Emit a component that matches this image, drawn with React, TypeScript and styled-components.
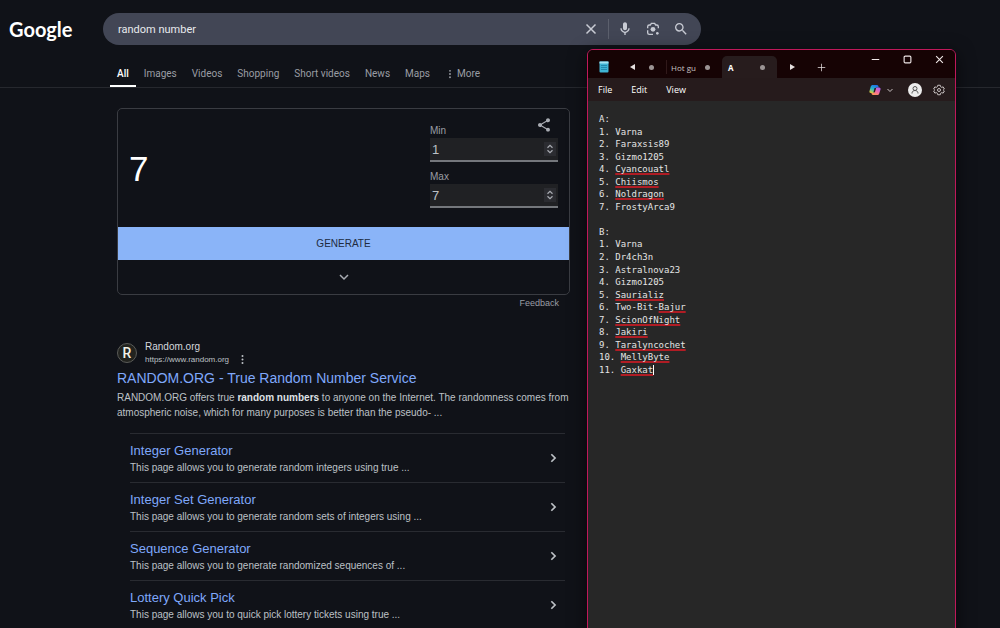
import React from "react";
import styled, { createGlobalStyle } from "styled-components";

const ui = '"Liberation Sans", Arial, sans-serif';
const brand = 'Roboto, "Liberation Sans", sans-serif';
const system = '"Open Sans", "Noto Sans", sans-serif';
const mono = '"DejaVu Sans Mono", "Liberation Mono", monospace';

const GlobalStyle = createGlobalStyle`
  * { box-sizing: border-box; }
  body {
    margin: 0;
    background: #101218;
    color: #bdc1c6;
    font-family: ${ui};
    font-size: 10px;
  }
  button { font: inherit; color: inherit; background: none; border: 0; padding: 0; }
  a { color: inherit; text-decoration: none; }
  p, h2, h3 { margin: 0; font-weight: 400; }
`;

const Desktop = styled.div`
  position: relative;
  height: 100vh;
  overflow: hidden;
`;

const Header = styled.header`
  border-bottom: 1px solid #26282e;
`;

const HeaderTop = styled.div`
  display: flex;
  align-items: center;
  padding: 13px 0 0 9px;
`;

const Logo = styled.a`
  width: 94px;
  font: 700 20px/32px Lato, sans-serif;
  color: #fff;
`;

const SearchBar = styled.form`
  display: flex;
  align-items: center;
  width: 598px;
  height: 32px;
  padding: 0 6px 0 15px;
  border-radius: 16px;
  background: #424655;
`;

const SearchInput = styled.input`
  flex: 1;
  min-width: 0;
  padding: 0;
  border: 0;
  outline: 0;
  background: none;
  color: #e8eaed;
  font: 11px ${brand};
`;

const SearchButton = styled.button`
  display: grid;
  place-items: center;
  width: 28px;
  height: 28px;
  color: #c8cbd4;
`;

const SearchDivider = styled.span`
  width: 1px;
  height: 20px;
  margin: 0 2px 0 3px;
  background: #5c606d;
`;

const Tabs = styled.nav`
  display: flex;
  gap: 1px;
  padding: 16px 0 0 110px;
  font: 10px/25px ${brand};
`;

const Tab = styled.a<{ $active?: boolean }>`
  height: 26px;
  padding: 0 7px;
  color: ${(p) => (p.$active ? "#fff" : "#9a9da4")};
  font-weight: ${(p) => (p.$active ? 500 : 400)};
  border-bottom: 2px solid ${(p) => (p.$active ? "#fff" : "transparent")};
`;

const MoreButton = styled.button`
  display: flex;
  align-items: center;
  gap: 2px;
  height: 25px;
  margin-left: 7px;
  color: #9a9da4;
`;

const Results = styled.main`
  width: 453px;
  margin: 20px 0 0 117px;
`;

const Card = styled.section`
  border: 1px solid #3a3c42;
  border-radius: 5px;
  overflow: hidden;
`;

const CardBody = styled.div`
  display: flex;
  justify-content: space-between;
  height: 118px;
  padding: 8px 11px 0;
`;

const Output = styled.output`
  margin-top: 32px;
  color: #fff;
  font-size: 35px;
  line-height: 40px;
`;

const Fields = styled.div`
  position: relative;
  width: 128px;
  padding-top: 6px;
`;

const ShareButton = styled.button`
  position: absolute;
  top: 0;
  right: 6px;
  width: 16px;
  height: 16px;
  color: #a9acb3;
`;

const Field = styled.div`
  display: flex;
  flex-direction: column;
  margin-bottom: 7px;
`;

const FieldLabel = styled.label`
  color: #9a9da4;
  font-size: 10px;
  line-height: 15px;
`;

const NumberBox = styled.div`
  display: flex;
  align-items: center;
  height: 24px;
  padding: 0 2px;
  background: #202124;
  border-bottom: 2px solid #74777c;
`;

const NumberInput = styled.input`
  flex: 1;
  min-width: 0;
  padding: 0;
  border: 0;
  outline: 0;
  background: none;
  color: #bdc1c6;
  font: 13px ${ui};
`;

const Spinner = styled.button`
  display: grid;
  place-items: center;
  width: 12px;
  height: 14px;
  background: #2b2c31;
  color: #a9acb3;
`;

const Generate = styled.button`
  display: block;
  width: 100%;
  height: 33px;
  background: #8ab4f8;
  color: #202b40;
`;

const Expand = styled.button`
  display: grid;
  place-items: center;
  width: 100%;
  height: 34px;
  color: #a9acb3;
`;

const Feedback = styled.a`
  display: block;
  padding-right: 11px;
  color: #9a9da4;
  font-size: 9px;
  line-height: 16px;
  text-align: right;
`;

const Result = styled.article`
  margin-top: 29px;
`;

const Source = styled.div`
  display: flex;
  align-items: center;
  gap: 8px;
`;

const Favicon = styled.span`
  display: grid;
  place-items: center;
  width: 20px;
  height: 20px;
  border: 1px solid #5a5b58;
  border-radius: 50%;
  background: #22231f;
  color: #f2f1e8;
  font: 500 14px/16px ${brand};
`;

const SiteName = styled.div`
  color: #d5d8dc;
  line-height: 13px;
`;

const SiteUrl = styled.div`
  display: flex;
  align-items: center;
  gap: 8px;
  font-size: 8px;
  line-height: 13px;
`;

const AboutButton = styled.button`
  display: grid;
`;

const ResultTitle = styled.h2`
  margin-top: 1px;
  color: #7fa8fb;
  font-size: 14px;
  line-height: 22px;
`;

const Snippet = styled.p`
  margin-top: 1px;
  line-height: 15px;

  b { color: #dfe1e5; }
`;

const SiteLinks = styled.ul`
  margin: 13px 5px 0 13px;
  padding: 0;
  list-style: none;
`;

const SiteLink = styled.li`
  display: flex;
  align-items: center;
  justify-content: space-between;
  height: 49px;
  padding-right: 7px;
  border-top: 1px solid #292b31;
`;

const LinkTitle = styled.h3`
  color: #7fa8fb;
  font-size: 13px;
  line-height: 18px;
`;

const LinkText = styled.p`
  line-height: 15px;
`;

const Notepad = styled.section`
  position: absolute;
  top: 49px;
  left: 587px;
  bottom: -8px;
  width: 369px;
  display: flex;
  flex-direction: column;
  overflow: hidden;
  border: 1px solid #c0185a;
  border-radius: 6px;
  background: #272727;
  box-shadow: 0 4px 18px rgba(0, 0, 0, 0.6);
  color: #fff;
  font: 10px ${system};
`;

const TitleBar = styled.div`
  display: flex;
  align-items: flex-end;
  height: 28px;
  background: #160304;
`;

const BarButton = styled.button<{ $width: number }>`
  display: grid;
  place-items: center;
  width: ${(p) => p.$width}px;
  height: 22px;
  color: #e6e0e0;
`;

const FileTab = styled.div<{ $width: number; $active?: boolean }>`
  display: flex;
  align-items: center;
  justify-content: space-between;
  width: ${(p) => p.$width}px;
  height: 22px;
  padding: 0 12px 0 ${(p) => (p.$active ? 6 : 4)}px;
  border-radius: 5px 5px 0 0;
  background: ${(p) => (p.$active ? "#271c1d" : "transparent")};
  color: ${(p) => (p.$active ? "#fff" : "#c9c2c2")};
  font-size: 8px;
  font-weight: ${(p) => (p.$active ? 700 : 400)};
  white-space: nowrap;
`;

const UnsavedDot = styled.span`
  flex: none;
  width: 5px;
  height: 5px;
  border-radius: 50%;
  background: #9b9494;
`;

const TabEdge = styled.span`
  width: 1px;
  height: 14px;
  margin: 4px 0;
  background: #30191a;
`;

const WindowControls = styled.div`
  display: flex;
  align-self: flex-start;
  margin-left: auto;
`;

const WindowButton = styled.button`
  display: grid;
  place-items: center;
  width: 32px;
  height: 18px;
  color: #f0e8e8;
`;

const MenuBar = styled.div`
  display: flex;
  align-items: center;
  height: 23px;
  padding: 0 10px;
  background: #261b1c;
`;

const MenuButton = styled.button`
  margin-right: 19px;
  font-size: 9px;
`;

const MenuTools = styled.div`
  display: flex;
  align-items: center;
  margin-left: auto;
`;

const ToolButton = styled.button<{ $gap?: number }>`
  display: grid;
  margin-left: ${(p) => p.$gap ?? 0}px;
  color: #c9c2c2;
`;

const Editor = styled.div`
  display: grid;
  grid-template-rows: repeat(21, 1fr);
  align-items: center;
  height: 263px;
  margin: 12px 11px 0;
  outline: 0;
  color: #e4e4e4;
  font: 9px/12px ${mono};
  white-space: pre;
`;

const Misspelt = styled.span`
  text-decoration: underline solid #b01c24 2px;
  text-underline-offset: 1px;
  text-decoration-skip-ink: none;
`;

const Caret = styled.span`
  border-left: 1px solid #fff;
`;

const tabs = ["All", "Images", "Videos", "Shopping", "Short videos", "News", "Maps"];

const links = [
  ["Integer Generator", "This page allows you to generate random integers using true ..."],
  ["Integer Set Generator", "This page allows you to generate random sets of integers using ..."],
  ["Sequence Generator", "This page allows you to generate randomized sequences of ..."],
  ["Lottery Quick Pick", "This page allows you to quick pick lottery tickets using true ..."],
];

/* Each line is its plain text followed by the part marked by the spelling check. */
const lines: [string, string?][] = [
  ["A:"],
  ["1. Varna"],
  ["2. Faraxsis89"],
  ["3. Gizmo1205"],
  ["4. ", "Cyancouatl"],
  ["5. ", "Chiismos"],
  ["6. ", "Noldragon"],
  ["7. FrostyArca9"],
  [""],
  ["B:"],
  ["1. Varna"],
  ["2. Dr4ch3n"],
  ["3. Astralnova23"],
  ["4. Gizmo1205"],
  ["5. ", "Saurializ"],
  ["6. Two-Bit-", "Bajur"],
  ["7. ", "ScionOfNight"],
  ["8. ", "Jakiri"],
  ["9. ", "Taralyncochet"],
  ["10. ", "MellyByte"],
  ["11. ", "Gaxkat"],
];

const Stroke = ({ d, size, box = 12, width = 1 }: { d: string; size: number; box?: number; width?: number }) => (
  <svg width={size} height={size} viewBox={`0 0 ${box} ${box}`} fill="none" stroke="currentColor" strokeWidth={width}>
    <path d={d} />
  </svg>
);

const Glyph = ({ d, size }: { d: string; size: number }) => (
  <svg width={size} height={size} viewBox="0 0 24 24" fill="currentColor">
    <path d={d} />
  </svg>
);

const DOTS = "M12 6.500a2.200 2.200 0 1 0 0-4.400 2.200 2.200 0 0 0 0 4.400zm0 3.300a2.200 2.200 0 1 0 0 4.400 2.200 2.200 0 0 0 0-4.400zm0 7.700a2.200 2.200 0 1 0 0 4.400 2.200 2.200 0 0 0 0-4.400z";
const MIC = "M12 14c1.66 0 3-1.34 3-3V5c0-1.66-1.34-3-3-3S9 3.340 9 5v6c0 1.660 1.340 3 3 3zm5-3c0 2.760-2.240 5-5 5s-5-2.240-5-5H5c0 3.530 2.610 6.430 6 6.920V21h2v-3.080c3.390-.49 6-3.390 6-6.920h-2z";
const SEARCH = "M15.500 14h-.79l-.28-.27A6.470 6.470 0 0 0 16 9.500 6.500 6.500 0 1 0 9.500 16c1.610 0 3.090-.59 4.230-1.570l.27.28v.79l5 4.990L20.490 19l-4.990-5zm-6 0C7.010 14 5 11.990 5 9.500S7.010 5 9.500 5 14 7.010 14 9.500 11.990 14 9.500 14z";
const SHARE = "M18 16.080c-.76 0-1.440.3-1.960.77L8.910 12.700c.05-.23.09-.46.09-.7s-.04-.47-.09-.7l7.050-4.110c.54.5 1.250.81 2.040.81 1.660 0 3-1.340 3-3s-1.340-3-3-3-3 1.340-3 3c0 .24.04.47.09.7L8.040 9.810C7.500 9.310 6.790 9 6 9c-1.660 0-3 1.340-3 3s1.340 3 3 3c.79 0 1.500-.31 2.040-.81l7.120 4.160c-.05.21-.08.43-.08.65 0 1.610 1.310 2.920 2.920 2.920s2.920-1.310 2.920-2.920-1.310-2.920-2.920-2.920z";

const Lens = () => (
  <svg width="16" height="16" viewBox="0 0 24 24" fill="none" stroke="currentColor" strokeWidth="2">
    <path d="M4 11V8.500A2.500 2.500 0 0 1 6.500 6H8l1.500-2.500h5L16 6h1.500A2.500 2.500 0 0 1 20 8.500V11M4 14v3.500A2.500 2.500 0 0 0 6.500 20H12" />
    <circle cx="12" cy="12.500" r="3.600" fill="currentColor" stroke="none" />
    <circle cx="18.500" cy="18.500" r="2" fill="currentColor" stroke="none" />
  </svg>
);

const NotepadIcon = () => (
  <svg width="10" height="12" viewBox="0 0 10 12">
    <rect x="0.500" y="0.500" width="9" height="11" rx="1" fill="#3fb4d4" />
    <rect x="0.500" y="0.500" width="9" height="2" fill="#a5e4f2" />
    <path d="M2 4.500h6M2 6.500h6M2 8.500h6" stroke="#1d7fa6" strokeWidth="0.800" />
  </svg>
);

const CopilotIcon = () => (
  <svg width="12" height="12" viewBox="0 0 24 24">
    <defs>
      <linearGradient id="cool" x1="0.600" y1="0" x2="0.200" y2="1">
        <stop offset="0" stopColor="#1f6fe8" />
        <stop offset="0.500" stopColor="#25b8c8" />
        <stop offset="1" stopColor="#e6cf35" />
      </linearGradient>
      <linearGradient id="warm" x1="0.800" y1="0" x2="0.200" y2="1">
        <stop offset="0" stopColor="#a45df0" />
        <stop offset="0.500" stopColor="#f06aa8" />
        <stop offset="1" stopColor="#ff9a4c" />
      </linearGradient>
    </defs>
    <path d="M8 2h8c2 0 2.500 1.500 3 3l.5 2h-4c-2 0-3 1-3.500 3l-1.500 5c-.5 2-1.500 3-3.500 3H4c-3 0-3.500-2-3-4l2.500-9C4.200 3 5.500 2 8 2z" fill="url(#cool)" />
    <path d="M16 22H8c-2 0-2.500-1.500-3-3l-.3-1H8c2 0 3-1 3.500-3L13 10c.5-2 1.500-3 3.500-3H20c3 0 3.500 2 3 4l-2.500 8c-.7 2-2 3-4.500 3z" fill="url(#warm)" />
    <path d="M11 8h3l-2 8H9z" fill="#281d20" />
  </svg>
);

const Avatar = () => (
  <svg width="14" height="14" viewBox="0 0 14 14">
    <circle cx="7" cy="7" r="7" fill="#ededed" />
    <g fill="none" stroke="#555" strokeWidth="1">
      <circle cx="7" cy="5.500" r="2" />
      <path d="M4 10.500c0-2 1.200-3 3-3s3 1 3 3" />
    </g>
  </svg>
);

const Gear = () => (
  <svg width="12" height="12" viewBox="0 0 24 24" fill="none" stroke="currentColor" strokeWidth="2">
    <path d="M9.500 2.500h5l.8 3 2 1.200 3-.9 2.400 4.200-2.200 2 0 0 2.200 2-2.400 4.200-3-.9-2 1.200-.8 3h-5l-.8-3-2-1.200-3 .9L1.300 14l2.200-2-2.200-2 2.400-4.200 3 .9 2-1.200z" strokeLinejoin="round" />
    <circle cx="12" cy="12" r="3" />
  </svg>
);

const NumberField = ({ id, label, value }: { id: string; label: string; value: string }) => (
  <Field>
    <FieldLabel htmlFor={id}>{label}</FieldLabel>
    <NumberBox>
      <NumberInput id={id} inputMode="numeric" defaultValue={value} />
      <Spinner type="button" aria-label={`Change ${label}`}>
        <Stroke size={10} width={1.4} d="M3 4.500 6 1.500 9 4.500M3 7.500 6 10.500 9 7.500" />
      </Spinner>
    </NumberBox>
  </Field>
);

export default function App() {
  return (
    <Desktop>
      <GlobalStyle />
      <Header>
        <HeaderTop>
          <Logo href="#">Google</Logo>
          <SearchBar role="search">
            <SearchInput aria-label="Search" defaultValue="random number" />
            <SearchButton type="button" aria-label="Clear">
              <Stroke size={12} width={1.5} d="M1.500 1.500l9 9M10.500 1.500l-9 9" />
            </SearchButton>
            <SearchDivider />
            <SearchButton type="button" aria-label="Search by voice"><Glyph size={16} d={MIC} /></SearchButton>
            <SearchButton type="button" aria-label="Search by image"><Lens /></SearchButton>
            <SearchButton type="submit" aria-label="Search"><Glyph size={16} d={SEARCH} /></SearchButton>
          </SearchBar>
        </HeaderTop>
        <Tabs>
          {tabs.map((name, i) => (
            <Tab key={name} href="#" $active={i === 0}>{name}</Tab>
          ))}
          <MoreButton type="button"><Glyph size={10} d={DOTS} />More</MoreButton>
        </Tabs>
      </Header>

      <Results>
        <Card>
          <CardBody>
            <Output>7</Output>
            <Fields>
              <ShareButton type="button" aria-label="Share"><Glyph size={16} d={SHARE} /></ShareButton>
              <NumberField id="min" label="Min" value="1" />
              <NumberField id="max" label="Max" value="7" />
            </Fields>
          </CardBody>
          <Generate type="button">GENERATE</Generate>
          <Expand type="button" aria-label="Show more">
            <Stroke size={12} width={1.5} d="M2 4l4 4 4-4" />
          </Expand>
        </Card>
        <Feedback href="#">Feedback</Feedback>

        <Result>
          <Source>
            <Favicon>R</Favicon>
            <div>
              <SiteName>Random.org</SiteName>
              <SiteUrl>
                https://www.random.org
                <AboutButton type="button" aria-label="About this result"><Glyph size={11} d={DOTS} /></AboutButton>
              </SiteUrl>
            </div>
          </Source>
          <ResultTitle><a href="#">RANDOM.ORG - True Random Number Service</a></ResultTitle>
          <Snippet>
            RANDOM.ORG offers true <b>random numbers</b> to anyone on the Internet. The randomness comes from
            atmospheric noise, which for many purposes is better than the pseudo- ...
          </Snippet>
          <SiteLinks>
            {links.map(([title, text]) => (
              <SiteLink key={title}>
                <div>
                  <LinkTitle><a href="#">{title}</a></LinkTitle>
                  <LinkText>{text}</LinkText>
                </div>
                <Stroke size={10} width={2} d="M4 1.500L8.500 6 4 10.500" />
              </SiteLink>
            ))}
          </SiteLinks>
        </Result>
      </Results>

      <Notepad>
        <TitleBar>
          <BarButton as="span" $width={32}><NotepadIcon /></BarButton>
          <BarButton type="button" aria-label="Scroll tabs left" $width={25}>
            <svg width="5" height="6"><path d="M5 0v6L0 3z" fill="currentColor" /></svg>
          </BarButton>
          <FileTab $width={21}><UnsavedDot /></FileTab>
          <TabEdge />
          <FileTab $width={55}>Hot gu<UnsavedDot /></FileTab>
          <FileTab $width={55} $active>A<UnsavedDot /></FileTab>
          <BarButton type="button" aria-label="Scroll tabs right" $width={30}>
            <svg width="5" height="6"><path d="M0 0v6l5-3z" fill="currentColor" /></svg>
          </BarButton>
          <BarButton type="button" aria-label="New tab" $width={28}>
            <Stroke size={9} d="M6 1v10M1 6h10" />
          </BarButton>
          <WindowControls>
            <WindowButton type="button" aria-label="Minimize"><Stroke size={9} width={1.5} d="M1 6h10" /></WindowButton>
            <WindowButton type="button" aria-label="Maximize">
              <Stroke size={9} width={1.5} d="M3 1.500h6a1.500 1.500 0 0 1 1.500 1.500v6a1.500 1.500 0 0 1-1.500 1.500H3A1.500 1.500 0 0 1 1.500 9V3A1.500 1.500 0 0 1 3 1.500z" />
            </WindowButton>
            <WindowButton type="button" aria-label="Close"><Stroke size={9} width={1.5} d="M1.500 1.500l9 9M10.500 1.500l-9 9" /></WindowButton>
          </WindowControls>
        </TitleBar>
        <MenuBar>
          <MenuButton type="button">File</MenuButton>
          <MenuButton type="button">Edit</MenuButton>
          <MenuButton type="button">View</MenuButton>
          <MenuTools>
            <ToolButton type="button" aria-label="Copilot"><CopilotIcon /></ToolButton>
            <ToolButton type="button" aria-label="Copilot options" $gap={6}>
              <Stroke size={6} width={2} d="M1 4l5 5 5-5" />
            </ToolButton>
            <ToolButton type="button" aria-label="Account" $gap={15}><Avatar /></ToolButton>
            <ToolButton type="button" aria-label="Settings" $gap={11}><Gear /></ToolButton>
          </MenuTools>
        </MenuBar>
        <Editor role="textbox" aria-multiline="true" aria-label="Text editor">
          {lines.map(([text, marked], i) => (
            <div key={i}>
              {text}
              {marked && <Misspelt>{marked}</Misspelt>}
              {i === lines.length - 1 && <Caret />}
            </div>
          ))}
        </Editor>
      </Notepad>
    </Desktop>
  );
}
